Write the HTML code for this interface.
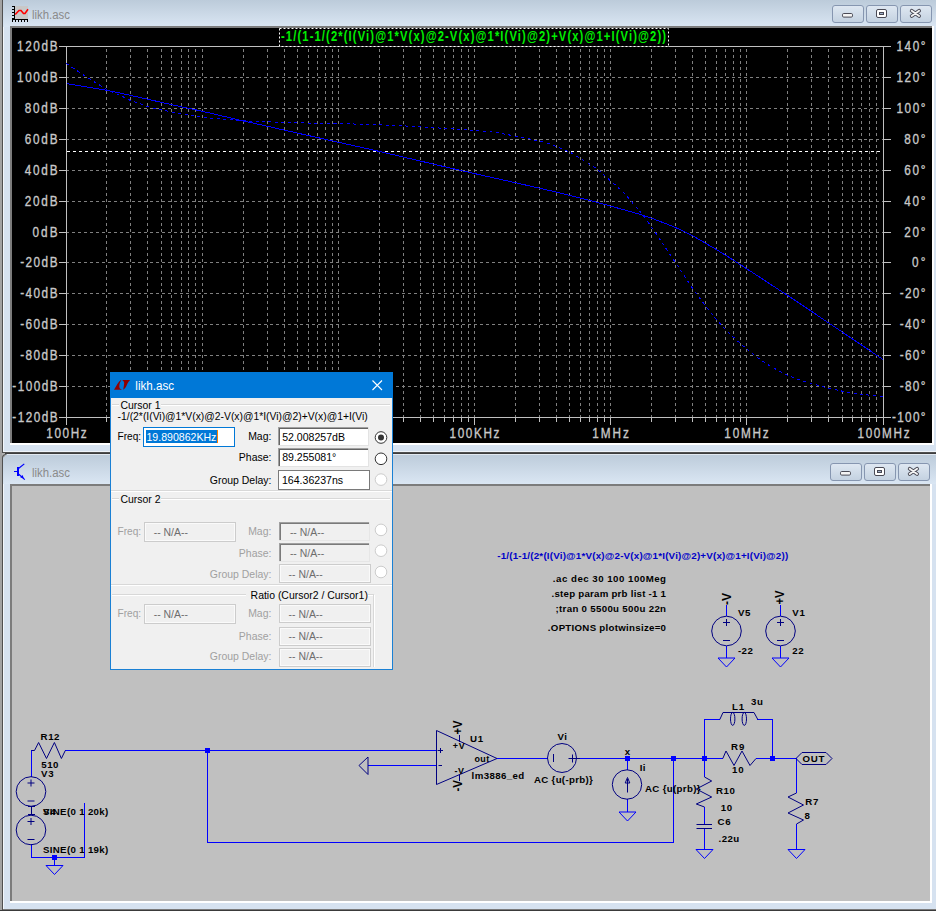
<!DOCTYPE html><html><head><meta charset="utf-8"><style>
html,body{margin:0;padding:0;background:#d6e2f0;}
body{width:936px;height:911px;overflow:hidden;position:relative;}
svg{position:absolute;left:0;top:0;}
text{font-family:"Liberation Sans",sans-serif;}
</style></head><body>
<svg width="936" height="911" viewBox="0 0 936 911">
<defs>
<linearGradient id="tg" x1="0" y1="0" x2="0" y2="1">
<stop offset="0" stop-color="#bccbda"/><stop offset="1" stop-color="#dae6f3"/></linearGradient>
<linearGradient id="bg" x1="0" y1="0" x2="0" y2="1">
<stop offset="0" stop-color="#dfe8f2"/><stop offset="1" stop-color="#c3d1e0"/></linearGradient>
</defs>

<rect x="0" y="0" width="936" height="453" fill="#d6e2f0"/>
<rect x="0" y="0" width="936" height="27" fill="url(#tg)"/>
<rect x="0" y="0" width="2" height="454" fill="#a2a2a2"/><rect x="2" y="0" width="1" height="453" fill="#4f4f4f"/><rect x="3" y="27" width="1" height="424" fill="#f2f6fb"/>
<rect x="3" y="451" width="933" height="1" fill="#eef3f8"/><rect x="3" y="452" width="933" height="1" fill="#505050"/><rect x="3" y="453" width="933" height="1" fill="#3c3c3c"/>
<rect x="10" y="26" width="924" height="419" fill="#ffffff"/>
<rect x="10" y="26" width="922" height="2" fill="#7c7c7c"/><rect x="10" y="26" width="2" height="417" fill="#7c7c7c"/>
<rect x="12" y="28" width="920" height="415" fill="#000"/>
<rect x="832.5" y="5.5" width="31" height="17" rx="2.5" ry="2.5" fill="url(#bg)" stroke="#8696b0" stroke-width="1"/><rect x="866.5" y="5.5" width="31" height="17" rx="2.5" ry="2.5" fill="url(#bg)" stroke="#8696b0" stroke-width="1"/><rect x="900.5" y="5.5" width="31" height="17" rx="2.5" ry="2.5" fill="url(#bg)" stroke="#8696b0" stroke-width="1"/><rect x="842.5" y="13.5" width="10" height="3.6" rx="1.2" fill="#f4f4f4" stroke="#4a4a55" stroke-width="1"/><rect x="876.5" y="9.5" width="10" height="8" rx="1.5" fill="#fff" stroke="#4a4a55" stroke-width="1"/><rect x="879.5" y="12.5" width="4" height="2" fill="#9fb0c8" stroke="#4a4a55" stroke-width="1"/><path d="M911.6999999999999,10.8 L919.1,16.0 M919.1,10.8 L911.6999999999999,16.0" stroke="#4a4a55" stroke-width="3.8" stroke-linecap="round"/><path d="M911.6999999999999,10.8 L919.1,16.0 M919.1,10.8 L911.6999999999999,16.0" stroke="#f4f4f4" stroke-width="1.9" stroke-linecap="round"/>
<rect x="15" y="6" width="13" height="13" fill="#c8c8c8"/>
<rect x="14" y="6" width="1" height="14" fill="#000"/><rect x="12" y="19" width="16" height="1" fill="#000"/>
<rect x="12" y="6" width="3" height="1" fill="#000"/><rect x="12" y="9" width="3" height="1" fill="#000"/><rect x="12" y="12" width="3" height="1" fill="#000"/><rect x="12" y="15" width="3" height="1" fill="#000"/><rect x="12" y="18" width="3" height="1" fill="#000"/>
<rect x="12" y="20" width="1" height="2" fill="#000"/><rect x="15" y="20" width="1" height="2" fill="#000"/><rect x="18" y="20" width="1" height="2" fill="#000"/><rect x="21" y="20" width="1" height="2" fill="#000"/><rect x="24" y="20" width="1" height="2" fill="#000"/><rect x="27" y="20" width="1" height="2" fill="#000"/>
<path d="M15.2,14.5 L19,10.5 L21,10.5 L23.5,13.5 L25,13.5 L28,9.3" stroke="#f00" stroke-width="1.6" fill="none"/>
<text x="32" y="19" font-size="12" fill="#8a8a8a" textLength="38" lengthAdjust="spacingAndGlyphs">likh.asc</text>
<path d="M66,77.5H883M66,108.5H883M66,139.5H883M66,170.5H883M66,201.5H883M66,232.5H883M66,262.5H883M66,293.5H883M66,324.5H883M66,355.5H883M66,386.5H883" stroke="#808080" stroke-width="1" stroke-dasharray="3 3" shape-rendering="crispEdges"/>
<path d="M106.5,49V417M130.5,49V417M147.5,49V417M161.5,49V417M171.5,49V417M181.5,49V417M188.5,49V417M195.5,49V417M202.5,49V417M243.5,49V417M267.5,49V417M284.5,49V417M297.5,49V417M308.5,49V417M317.5,49V417M325.5,49V417M332.5,49V417M338.5,49V417M379.5,49V417M403.5,49V417M420.5,49V417M433.5,49V417M444.5,49V417M453.5,49V417M461.5,49V417M468.5,49V417M474.5,49V417M515.5,49V417M539.5,49V417M556.5,49V417M569.5,49V417M580.5,49V417M589.5,49V417M597.5,49V417M604.5,49V417M610.5,49V417M651.5,49V417M675.5,49V417M692.5,49V417M705.5,49V417M716.5,49V417M725.5,49V417M733.5,49V417M740.5,49V417M746.5,49V417M787.5,49V417M811.5,49V417M828.5,49V417M842.5,49V417M852.5,49V417M861.5,49V417M869.5,49V417M876.5,49V417" stroke="#808080" stroke-width="1" stroke-dasharray="3 3" shape-rendering="crispEdges"/>
<path d="M59,46.5H891M59,417.5H891M66.5,46V425M883.5,46V425M59,46.5H66M884,46.5H891M59,77.5H66M884,77.5H891M59,108.5H66M884,108.5H891M59,139.5H66M884,139.5H891M59,170.5H66M884,170.5H891M59,201.5H66M884,201.5H891M59,232.5H66M884,232.5H891M59,262.5H66M884,262.5H891M59,293.5H66M884,293.5H891M59,324.5H66M884,324.5H891M59,355.5H66M884,355.5H891M59,386.5H66M884,386.5H891M59,417.5H66M884,417.5H891M66.5,418V425M106.5,418V422M130.5,418V422M147.5,418V422M161.5,418V422M171.5,418V422M181.5,418V422M188.5,418V422M195.5,418V422M202.5,418V425M243.5,418V422M267.5,418V422M284.5,418V422M297.5,418V422M308.5,418V422M317.5,418V422M325.5,418V422M332.5,418V422M338.5,418V425M379.5,418V422M403.5,418V422M420.5,418V422M433.5,418V422M444.5,418V422M453.5,418V422M461.5,418V422M468.5,418V422M474.5,418V425M515.5,418V422M539.5,418V422M556.5,418V422M569.5,418V422M580.5,418V422M589.5,418V422M597.5,418V422M604.5,418V422M610.5,418V425M651.5,418V422M675.5,418V422M692.5,418V422M705.5,418V422M716.5,418V422M725.5,418V422M733.5,418V422M740.5,418V422M746.5,418V425M787.5,418V422M811.5,418V422M828.5,418V422M842.5,418V422M852.5,418V422M861.5,418V422M869.5,418V422M876.5,418V422M883.5,418V425" stroke="#c0c0c0" stroke-width="1" fill="none" shape-rendering="crispEdges"/>
<g font-size="14" fill="#c8c8c8" stroke="#c8c8c8" stroke-width="0.35"><text transform="translate(17.02,50.80) scale(0.84,1)" x="0" y="0" textLength="48.19" lengthAdjust="spacing">120dB</text><text transform="translate(896.54,50.80) scale(0.84,1)" x="0" y="0" textLength="34.47" lengthAdjust="spacing">140°</text><text transform="translate(17.02,81.80) scale(0.84,1)" x="0" y="0" textLength="48.19" lengthAdjust="spacing">100dB</text><text transform="translate(896.54,81.80) scale(0.84,1)" x="0" y="0" textLength="34.47" lengthAdjust="spacing">120°</text><text transform="translate(24.80,112.80) scale(0.84,1)" x="0" y="0" textLength="38.92" lengthAdjust="spacing">80dB</text><text transform="translate(896.54,112.80) scale(0.84,1)" x="0" y="0" textLength="34.47" lengthAdjust="spacing">100°</text><text transform="translate(24.80,143.80) scale(0.84,1)" x="0" y="0" textLength="38.92" lengthAdjust="spacing">60dB</text><text transform="translate(904.33,143.80) scale(0.84,1)" x="0" y="0" textLength="25.20" lengthAdjust="spacing">80°</text><text transform="translate(24.80,174.80) scale(0.84,1)" x="0" y="0" textLength="38.92" lengthAdjust="spacing">40dB</text><text transform="translate(904.33,174.80) scale(0.84,1)" x="0" y="0" textLength="25.20" lengthAdjust="spacing">60°</text><text transform="translate(24.80,205.80) scale(0.84,1)" x="0" y="0" textLength="38.92" lengthAdjust="spacing">20dB</text><text transform="translate(904.33,205.80) scale(0.84,1)" x="0" y="0" textLength="25.20" lengthAdjust="spacing">40°</text><text transform="translate(32.59,236.80) scale(0.84,1)" x="0" y="0" textLength="29.65" lengthAdjust="spacing">0dB</text><text transform="translate(904.33,236.80) scale(0.84,1)" x="0" y="0" textLength="25.20" lengthAdjust="spacing">20°</text><text transform="translate(20.14,266.80) scale(0.84,1)" x="0" y="0" textLength="44.47" lengthAdjust="spacing">-20dB</text><text transform="translate(912.12,266.80) scale(0.84,1)" x="0" y="0" textLength="15.93" lengthAdjust="spacing">0°</text><text transform="translate(20.14,297.80) scale(0.84,1)" x="0" y="0" textLength="44.47" lengthAdjust="spacing">-40dB</text><text transform="translate(899.67,297.80) scale(0.84,1)" x="0" y="0" textLength="30.75" lengthAdjust="spacing">-20°</text><text transform="translate(20.14,328.80) scale(0.84,1)" x="0" y="0" textLength="44.47" lengthAdjust="spacing">-60dB</text><text transform="translate(899.67,328.80) scale(0.84,1)" x="0" y="0" textLength="30.75" lengthAdjust="spacing">-40°</text><text transform="translate(20.14,359.80) scale(0.84,1)" x="0" y="0" textLength="44.47" lengthAdjust="spacing">-80dB</text><text transform="translate(899.67,359.80) scale(0.84,1)" x="0" y="0" textLength="30.75" lengthAdjust="spacing">-60°</text><text transform="translate(12.36,390.80) scale(0.84,1)" x="0" y="0" textLength="53.74" lengthAdjust="spacing">-100dB</text><text transform="translate(899.67,390.80) scale(0.84,1)" x="0" y="0" textLength="30.75" lengthAdjust="spacing">-80°</text><text transform="translate(12.36,421.80) scale(0.84,1)" x="0" y="0" textLength="53.74" lengthAdjust="spacing">-120dB</text><text transform="translate(891.88,421.80) scale(0.84,1)" x="0" y="0" textLength="40.02" lengthAdjust="spacing">-100°</text><text transform="translate(46.27,437.80) scale(0.84,1)" x="0" y="0" textLength="48.18" lengthAdjust="spacing">100Hz</text><text transform="translate(185.38,437.80) scale(0.84,1)" x="0" y="0" textLength="40.76" lengthAdjust="spacing">1KHz</text><text transform="translate(317.49,437.80) scale(0.84,1)" x="0" y="0" textLength="50.02" lengthAdjust="spacing">10KHz</text><text transform="translate(449.60,437.80) scale(0.84,1)" x="0" y="0" textLength="59.29" lengthAdjust="spacing">100KHz</text><text transform="translate(592.22,437.80) scale(0.84,1)" x="0" y="0" textLength="43.52" lengthAdjust="spacing">1MHz</text><text transform="translate(724.33,437.80) scale(0.84,1)" x="0" y="0" textLength="52.79" lengthAdjust="spacing">10MHz</text><text transform="translate(857.43,437.80) scale(0.84,1)" x="0" y="0" textLength="62.06" lengthAdjust="spacing">100MHz</text></g>
<path d="M67,151.5H883" stroke="#fff" stroke-width="1" stroke-dasharray="3 3" shape-rendering="crispEdges"/>
<path d="M66.50,83.60 C73.25,84.73 94.75,88.08 107.00,90.40 C119.25,92.72 128.08,94.87 140.00,97.50 C151.92,100.13 168.03,103.88 178.50,106.20 C188.97,108.52 192.12,108.97 202.80,111.40 C213.48,113.83 233.07,118.60 242.60,120.80 C252.13,123.00 250.48,122.47 260.00,124.60 C269.52,126.73 279.75,129.12 299.70,133.60 C319.65,138.08 354.65,145.77 379.70,151.50 C404.75,157.23 424.95,162.25 450.00,168.00 C475.05,173.75 511.67,181.83 530.00,186.00 C548.33,190.17 549.88,190.55 560.00,193.00 C570.12,195.45 580.45,198.02 590.70,200.70 C600.95,203.38 612.78,206.67 621.50,209.10 C630.22,211.53 636.58,213.25 643.00,215.30 C649.42,217.35 653.83,219.03 660.00,221.40 C666.17,223.77 674.67,227.15 680.00,229.50 C685.33,231.85 685.00,231.58 692.00,235.50 C699.00,239.42 711.67,246.67 722.00,253.00 C732.33,259.33 742.67,266.17 754.00,273.50 C765.33,280.83 777.42,288.67 790.00,297.00 C802.58,305.33 814.05,313.12 829.50,323.50 C844.95,333.88 873.83,353.33 882.70,359.30" stroke="#0000ff" stroke-width="1" fill="none" shape-rendering="crispEdges"/>
<path d="M66.50,63.50 C69.68,65.65 79.57,72.48 85.60,76.40 C91.63,80.32 98.70,84.58 102.70,87.00 C106.70,89.42 106.47,89.40 109.60,90.90 C112.73,92.40 118.10,94.45 121.50,96.00 C124.90,97.55 126.92,98.92 130.00,100.20 C133.08,101.48 136.42,102.47 140.00,103.70 C143.58,104.93 147.65,106.52 151.50,107.60 C155.35,108.68 159.03,109.35 163.10,110.20 C167.17,111.05 171.85,111.92 175.90,112.70 C179.95,113.48 183.55,114.22 187.40,114.90 C191.25,115.58 194.08,116.17 199.00,116.80 C203.92,117.43 211.78,118.22 216.90,118.70 C222.02,119.18 224.78,119.32 229.70,119.70 C234.62,120.08 241.48,120.68 246.40,121.00 C251.32,121.32 250.27,121.30 259.20,121.60 C268.13,121.90 279.87,122.27 300.00,122.80 C320.13,123.33 356.03,123.88 380.00,124.80 C403.97,125.72 425.90,127.18 443.80,128.30 C461.70,129.42 475.43,130.18 487.40,131.50 C499.37,132.82 505.78,134.32 515.60,136.20 C525.42,138.08 538.90,140.82 546.30,142.80 C553.70,144.78 555.80,146.40 560.00,148.10 C564.20,149.80 567.67,150.98 571.50,153.00 C575.33,155.02 579.03,157.72 583.00,160.20 C586.97,162.68 591.45,165.12 595.30,167.90 C599.15,170.68 601.73,173.10 606.10,176.90 C610.47,180.70 616.88,186.13 621.50,190.70 C626.12,195.27 630.22,200.20 633.80,204.30 C637.38,208.40 639.42,210.60 643.00,215.30 C646.58,220.00 651.20,226.57 655.30,232.50 C659.40,238.43 663.23,244.40 667.60,250.90 C671.97,257.40 677.13,264.98 681.50,271.50 C685.87,278.02 689.43,283.78 693.80,290.00 C698.17,296.22 703.73,303.68 707.70,308.80 C711.67,313.92 714.28,316.90 717.60,320.70 C720.92,324.50 723.62,327.63 727.60,331.60 C731.58,335.57 737.40,340.85 741.50,344.50 C745.60,348.15 748.37,350.50 752.20,353.50 C756.03,356.50 759.88,359.52 764.50,362.50 C769.12,365.48 775.12,368.88 779.90,371.40 C784.68,373.92 787.95,375.58 793.20,377.60 C798.45,379.62 805.35,381.72 811.40,383.50 C817.45,385.28 823.45,386.85 829.50,388.30 C835.55,389.75 841.82,391.15 847.70,392.20 C853.58,393.25 858.97,393.88 864.80,394.60 C870.63,395.32 879.72,396.18 882.70,396.50" stroke="#0000ff" stroke-width="1" fill="none" stroke-dasharray="3 3.5" shape-rendering="crispEdges"/>
<rect x="279.5" y="28.5" width="389" height="18" fill="#000" stroke="#fff" stroke-width="1" stroke-dasharray="2 2"/>
<text transform="translate(281,41.3) scale(0.8,1)" x="0" y="0" font-size="14" font-weight="bold" fill="#00f000" textLength="481.25" lengthAdjust="spacing">-1/(1-1/(2*(I(Vi)@1*V(x)@2-V(x)@1*I(Vi)@2)+V(x)@1+I(Vi)@2))</text>
<rect x="0" y="454" width="936" height="457" fill="#d6e2f0"/>
<rect x="3" y="454" width="933" height="30" fill="url(#tg)"/><rect x="3" y="454" width="933" height="1" fill="#e2e9f1"/>
<rect x="0" y="454" width="2" height="457" fill="#a2a2a2"/><rect x="2" y="457" width="1" height="454" fill="#4f4f4f"/><rect x="2" y="453" width="3" height="4" fill="#b0b0b0"/><path d="M2.5,458 Q2.5,454.5 6.5,454.5" stroke="#555" stroke-width="1.2" fill="none"/><rect x="3" y="484" width="1" height="425" fill="#f2f6fb"/>
<rect x="3" y="909" width="933" height="1" fill="#7a7a7a"/><rect x="0" y="910" width="936" height="1" fill="#3a3a3a"/>
<rect x="10" y="484" width="922" height="419" fill="#ffffff"/>
<rect x="10" y="484" width="920" height="2" fill="#7c7c7c"/><rect x="10" y="484" width="2" height="417" fill="#7c7c7c"/>
<rect x="12" y="486" width="918" height="415" fill="#c0c0c0"/>
<rect x="830.5" y="463.5" width="31" height="17" rx="2.5" ry="2.5" fill="url(#bg)" stroke="#8696b0" stroke-width="1"/><rect x="864.5" y="463.5" width="31" height="17" rx="2.5" ry="2.5" fill="url(#bg)" stroke="#8696b0" stroke-width="1"/><rect x="898.5" y="463.5" width="31" height="17" rx="2.5" ry="2.5" fill="url(#bg)" stroke="#8696b0" stroke-width="1"/><rect x="840.5" y="471.5" width="10" height="3.6" rx="1.2" fill="#f4f4f4" stroke="#4a4a55" stroke-width="1"/><rect x="874.5" y="467.5" width="10" height="8" rx="1.5" fill="#fff" stroke="#4a4a55" stroke-width="1"/><rect x="877.5" y="470.5" width="4" height="2" fill="#9fb0c8" stroke="#4a4a55" stroke-width="1"/><path d="M909.6999999999999,468.79999999999995 L917.1,474.0 M917.1,468.79999999999995 L909.6999999999999,474.0" stroke="#4a4a55" stroke-width="3.8" stroke-linecap="round"/><path d="M909.6999999999999,468.79999999999995 L917.1,474.0 M917.1,468.79999999999995 L909.6999999999999,474.0" stroke="#f4f4f4" stroke-width="1.9" stroke-linecap="round"/>
<rect x="14" y="471" width="3" height="1" fill="#0000ff"/><rect x="17" y="467" width="2" height="9" fill="#0000ff"/><path d="M18.8,468.3 L24.3,463.9 M18.8,474.2 L24.8,479.6" stroke="#0000ff" stroke-width="1.2" fill="none"/><path d="M20.2,477.3 L22.6,475 L24,478.8 Z" fill="#0000ff"/>
<text x="32" y="477" font-size="12" fill="#8a8a8a" textLength="38" lengthAdjust="spacingAndGlyphs">likh.asc</text>
<path d="M65,750.5H436M31.5,750V777M31.5,844V857.5H84.5V803M207.5,750V842.5H673.5V758M368,765.5H436M497,758.5H548M577,758.5H723M756,758.5H796M627.5,758V770M627.5,799V812M704.5,719V777M704.5,719.5H720M757,719.5H772.5V758M704.5,807V824M704.5,829V849M796.5,758V793M796.5,824V849M726.5,605V616M726.5,646V658M780.5,605V616M780.5,646V658" stroke="#0000ff" stroke-width="1" fill="none" shape-rendering="crispEdges"/>
<rect x="205.0" y="748.0" width="5" height="5" fill="#0000ff"/>
<rect x="52.0" y="855.0" width="5" height="5" fill="#0000ff"/>
<rect x="625.0" y="756.0" width="5" height="5" fill="#0000ff"/>
<rect x="671.0" y="756.0" width="5" height="5" fill="#0000ff"/>
<rect x="702.0" y="756.0" width="5" height="5" fill="#0000ff"/>
<rect x="770.0" y="756.0" width="5" height="5" fill="#0000ff"/>
<path d="M46.0,865.5H63.0L54.5,874.5ZM619.0,812H636.0L627.5,821ZM696.0,849.5H713.0L704.5,858.5ZM788.0,849.5H805.0L796.5,858.5ZM718.0,658H735.0L726.5,667ZM772.0,658H789.0L780.5,667ZM54.5,857.5V865.5" stroke="#0000ff" stroke-width="1" fill="none"/>
<path d="M31.5,750.5H34.5L38.6,742.5L46.5,758.5L54.4,742.5L61.4,758.5L65.3,750.5M722.8,758.5L726,751L734,765.5L742,751L750,765.5L756,758.5M704.5,777L711.7,781L696.3,789L711.7,797L696.3,804L704.5,807M796.5,793L788,797L803.5,805L788,813L803.5,820L796.5,824M696.5,824.5H712M696.5,828.5H712M436.5,730.5L497,758.5L436.5,784.5ZM368,757V774.5L359,765.5ZM796,758.5L802,752.5H826L832,758.5L826,764.5H802ZM719.8,719.5L723,712.5H754L757.8,719.5" stroke="#000080" stroke-width="1" fill="none"/>
<circle cx="31" cy="791.5" r="14.8" fill="none" stroke="#000080"/><path d="M27.5,783.0H34.5M31,779.5V786.5M27.5,801.0H34.5" stroke="#000080" stroke-width="1" fill="none"/><circle cx="31" cy="830" r="14.8" fill="none" stroke="#000080"/><path d="M27.5,821.5H34.5M31,818V825M27.5,839.5H34.5" stroke="#000080" stroke-width="1" fill="none"/><circle cx="726.5" cy="631" r="14.8" fill="none" stroke="#000080"/><path d="M723.0,622.5H730.0M726.5,619V626M723.0,640.5H730.0" stroke="#000080" stroke-width="1" fill="none"/><circle cx="780.5" cy="631" r="14.8" fill="none" stroke="#000080"/><path d="M777.0,622.5H784.0M780.5,619V626M777.0,640.5H784.0" stroke="#000080" stroke-width="1" fill="none"/>
<ellipse cx="732.7" cy="718.9" rx="2.2" ry="6.5" fill="none" stroke="#000080"/><ellipse cx="744.3" cy="718.9" rx="2.2" ry="6.5" fill="none" stroke="#000080"/>
<path d="M31.5,806V815M28,806.5H35M28,814.5H35" stroke="#000080" fill="none"/>
<circle cx="562" cy="758" r="14.5" fill="none" stroke="#000080"/><path d="M553.5,754V762M568.5,758.5H580M572.5,754.5V762.5" stroke="#000080" fill="none"/>
<circle cx="627" cy="784.5" r="14.7" fill="none" stroke="#000080"/><path d="M627.5,792.5V779M625.2,783L627.5,777.5L629.8,783Z" stroke="#000080" fill="none"/>
<path d="M459.5,735V742M459.5,774.5V781" stroke="#000080" fill="none"/>
<path d="M437.5,750.5H443M440.5,748V753M438.5,765.5H442" stroke="#000080" fill="none"/>
<text x="40.60" y="740" font-size="9.7" fill="#000" font-weight="bold" textLength="18.89" lengthAdjust="spacing">R12</text><text x="41.30" y="767.8" font-size="9.7" fill="#000" font-weight="bold" textLength="17.18" lengthAdjust="spacing">510</text><text x="41.00" y="776.8" font-size="9.7" fill="#000" font-weight="bold" textLength="12.60" lengthAdjust="spacing">V3</text><text x="43.00" y="815.2" font-size="9.7" fill="#000" font-weight="bold" textLength="12.60" lengthAdjust="spacing">V4</text><text x="43.00" y="815.2" font-size="9.7" fill="#000" font-weight="bold" textLength="65.26" lengthAdjust="spacing">SINE(0 1 20k)</text><text x="43.00" y="853" font-size="9.7" fill="#000" font-weight="bold" textLength="65.26" lengthAdjust="spacing">SINE(0 1 19k)</text><text x="470.00" y="741.8" font-size="9.7" fill="#000" font-weight="bold" textLength="13.17" lengthAdjust="spacing">U1</text><text x="471.60" y="778.7" font-size="9.7" fill="#000" font-weight="bold" textLength="52.68" lengthAdjust="spacing">lm3886_ed</text><text x="452.80" y="748.7" font-size="8.93" fill="#000" font-weight="bold" textLength="11.89" lengthAdjust="spacing">+V</text><text x="474.40" y="761.6" font-size="8.93" fill="#000" font-weight="bold" textLength="14.77" lengthAdjust="spacing">out</text><text x="454.50" y="774" font-size="8.93" fill="#000" font-weight="bold" textLength="9.50" lengthAdjust="spacing">-V</text><text x="557.40" y="740.3" font-size="9.7" fill="#000" font-weight="bold" textLength="9.55" lengthAdjust="spacing">Vi</text><text x="533.90" y="783" font-size="9.7" fill="#000" font-weight="bold" textLength="58.93" lengthAdjust="spacing">AC {u(-prb)}</text><text x="624.70" y="755" font-size="9.7" fill="#000" font-weight="bold" textLength="5.73" lengthAdjust="spacing">x</text><text x="639.70" y="770.9" font-size="9.7" fill="#000" font-weight="bold" textLength="5.72" lengthAdjust="spacing">Ii</text><text x="645.00" y="791.6" font-size="9.7" fill="#000" font-weight="bold" textLength="55.50" lengthAdjust="spacing">AC {u(prb)}</text><text x="732.10" y="710.2" font-size="9.7" fill="#000" font-weight="bold" textLength="12.02" lengthAdjust="spacing">L1</text><text x="750.90" y="705" font-size="9.7" fill="#000" font-weight="bold" textLength="12.02" lengthAdjust="spacing">3u</text><text x="731.10" y="749.9" font-size="9.7" fill="#000" font-weight="bold" textLength="13.17" lengthAdjust="spacing">R9</text><text x="732.10" y="772.8" font-size="9.7" fill="#000" font-weight="bold" textLength="11.46" lengthAdjust="spacing">10</text><text x="802.60" y="762.4" font-size="9.7" fill="#000" font-weight="bold" textLength="21.74" lengthAdjust="spacing">OUT</text><text x="715.90" y="793.7" font-size="9.7" fill="#000" font-weight="bold" textLength="18.89" lengthAdjust="spacing">R10</text><text x="720.70" y="811" font-size="9.7" fill="#000" font-weight="bold" textLength="11.46" lengthAdjust="spacing">10</text><text x="717.50" y="825" font-size="9.7" fill="#000" font-weight="bold" textLength="13.17" lengthAdjust="spacing">C6</text><text x="718.60" y="842.3" font-size="9.7" fill="#000" font-weight="bold" textLength="20.61" lengthAdjust="spacing">.22u</text><text x="805.20" y="805.2" font-size="9.7" fill="#000" font-weight="bold" textLength="13.17" lengthAdjust="spacing">R7</text><text x="804.50" y="819.3" font-size="9.7" fill="#000" font-weight="bold" textLength="5.73" lengthAdjust="spacing">8</text><text x="737.90" y="615.9" font-size="9.7" fill="#000" font-weight="bold" textLength="12.60" lengthAdjust="spacing">V5</text><text x="737.90" y="654" font-size="9.7" fill="#000" font-weight="bold" textLength="14.89" lengthAdjust="spacing">-22</text><text x="792.20" y="615.9" font-size="9.7" fill="#000" font-weight="bold" textLength="12.60" lengthAdjust="spacing">V1</text><text x="792.20" y="654" font-size="9.7" fill="#000" font-weight="bold" textLength="11.46" lengthAdjust="spacing">22</text><text x="552.87" y="581.9" font-size="9.7" fill="#000" font-weight="bold" textLength="113.13" lengthAdjust="spacing">.ac dec 30 100 100Meg</text><text x="551.51" y="596.8" font-size="9.7" fill="#000" font-weight="bold" textLength="114.49" lengthAdjust="spacing">.step param prb list -1 1</text><text x="555.52" y="611.8" font-size="9.7" fill="#000" font-weight="bold" textLength="110.48" lengthAdjust="spacing">;tran 0 5500u 500u 22n</text><text x="547.83" y="630.6" font-size="9.7" fill="#000" font-weight="bold" textLength="118.17" lengthAdjust="spacing">.OPTIONS plotwinsize=0</text><text x="497.20" y="559.1" font-size="9.8" fill="#0000c8" font-weight="bold" textLength="291.00" lengthAdjust="spacing">-1/(1-1/(2*(I(Vi)@1*V(x)@2-V(x)@1*I(Vi)@2)+V(x)@1+I(Vi)@2))</text>
<text transform="translate(730.5,605) rotate(-90)" x="0" y="0" font-size="12" font-weight="bold" fill="#000" textLength="12" lengthAdjust="spacingAndGlyphs">-V</text>
<text transform="translate(783.5,604.5) rotate(-90)" x="0" y="0" font-size="12" font-weight="bold" fill="#000" textLength="14" lengthAdjust="spacingAndGlyphs">+V</text>
<text transform="translate(462,734.5) rotate(-90)" x="0" y="0" font-size="12" font-weight="bold" fill="#000" textLength="14" lengthAdjust="spacingAndGlyphs">+V</text>
<text transform="translate(462,791.5) rotate(-90)" x="0" y="0" font-size="12" font-weight="bold" fill="#000" textLength="11.5" lengthAdjust="spacingAndGlyphs">-V</text>
<rect x="110" y="372" width="283" height="298" fill="#1a80d4"/>
<rect x="111" y="398" width="281" height="271" fill="#f0f0f0"/>
<rect x="110" y="372" width="283" height="26" fill="#0078d7"/>
<path d="M121,380 C118.5,381.5 116.5,385.5 114,389.8 L122,389.8 C120.7,389.3 119.5,388.6 119.3,386.8 C119.2,384.5 120,382.2 121.3,380.3 Z" fill="#900000"/>
<path d="M122.2,380 L130.2,380 C128.8,381 127.6,383 126.6,385.5 C125.8,387.5 124.6,388.9 123.2,389.8 C123.5,388 124,385 124.2,383 C124.1,381.8 123.3,380.8 122.2,380 Z" fill="#900000"/>
<text x="135.30" y="389.5" font-size="12.5" fill="#fff" textLength="38.76" lengthAdjust="spacingAndGlyphs">likh.asc</text>
<path d="M372.5,380.5 L382,390 M382,380.5 L372.5,390" stroke="#fff" stroke-width="1.1"/>
<path d="M112,404.5H119" stroke="#d8d8d8" stroke-width="1" shape-rendering="crispEdges"/><path d="M112,405.5H119" stroke="#fff" stroke-width="1" shape-rendering="crispEdges"/>
<path d="M161,404.5H390" stroke="#d8d8d8" stroke-width="1" shape-rendering="crispEdges"/><path d="M161,405.5H390" stroke="#fff" stroke-width="1" shape-rendering="crispEdges"/>
<text x="120.50" y="408.6" font-size="11" fill="#000" textLength="40.07" lengthAdjust="spacingAndGlyphs">Cursor 1</text>
<clipPath id="dc"><rect x="111" y="405" width="257" height="20"/></clipPath>
<g clip-path="url(#dc)"><text x="117.60" y="419.8" font-size="11" fill="#000" textLength="273.26" lengthAdjust="spacingAndGlyphs">-1/(2*(I(Vi)@1*V(x)@2-V(x)@1*I(Vi)@2)+V(x)@1+I(Vi)@2))</text></g>
<text x="117.50" y="439.9" font-size="11" fill="#000" textLength="23.62" lengthAdjust="spacingAndGlyphs">Freq:</text>
<text x="248.17" y="440.4" font-size="11" fill="#000" textLength="23.23" lengthAdjust="spacingAndGlyphs">Mag:</text>
<text x="238.87" y="461.1" font-size="11" fill="#000" textLength="32.53" lengthAdjust="spacingAndGlyphs">Phase:</text>
<text x="209.84" y="484" font-size="11" fill="#000" textLength="61.56" lengthAdjust="spacingAndGlyphs">Group Delay:</text>
<rect x="143.5" y="427.5" width="91" height="19" fill="#fff" stroke="#0078d7"/>
<rect x="146" y="430" width="71" height="13" fill="#0078d7"/>
<text x="146.50" y="440.7" font-size="11" fill="#fff" textLength="69.86" lengthAdjust="spacingAndGlyphs">19.890862KHz</text>
<rect x="217" y="430" width="1" height="13" fill="#ff8000"/>
<rect x="278" y="427" width="91" height="19" fill="#fff"/><rect x="278" y="427" width="91" height="2" fill="#a0a0a0"/><rect x="278" y="427" width="2" height="19" fill="#a0a0a0"/><rect x="279" y="428" width="89" height="1" fill="#646464"/><rect x="279" y="428" width="1" height="17" fill="#646464"/><rect x="278" y="445" width="91" height="1" fill="#e3e3e3"/><rect x="368" y="427" width="1" height="19" fill="#e3e3e3"/>
<text x="282.20" y="440.6" font-size="11" fill="#000" textLength="62.83" lengthAdjust="spacingAndGlyphs">52.008257dB</text>
<rect x="278" y="448" width="91" height="19" fill="#fff"/><rect x="278" y="448" width="91" height="2" fill="#a0a0a0"/><rect x="278" y="448" width="2" height="19" fill="#a0a0a0"/><rect x="279" y="449" width="89" height="1" fill="#646464"/><rect x="279" y="449" width="1" height="17" fill="#646464"/><rect x="278" y="466" width="91" height="1" fill="#e3e3e3"/><rect x="368" y="448" width="1" height="19" fill="#e3e3e3"/>
<text x="282.20" y="460.8" font-size="11" fill="#000" textLength="54.13" lengthAdjust="spacingAndGlyphs">89.255081°</text>
<rect x="278.5" y="470.5" width="91" height="19" fill="#fff" stroke="#7a7a7a" shape-rendering="crispEdges"/>
<text x="282.00" y="483.5" font-size="11" fill="#000" textLength="61.06" lengthAdjust="spacingAndGlyphs">164.36237ns</text>
<circle cx="381" cy="437.5" r="5.8" fill="#fff" stroke="#333333" stroke-width="1"/><circle cx="381" cy="437.5" r="3" fill="#333"/>
<circle cx="381" cy="458.8" r="5.8" fill="#fff" stroke="#333333" stroke-width="1"/>
<circle cx="381" cy="479.6" r="5.8" fill="#fff" stroke="#cccccc" stroke-width="1"/>
<path d="M111,490.5H392" stroke="#d8d8d8" stroke-width="1" shape-rendering="crispEdges"/><path d="M111,491.5H392" stroke="#fff" stroke-width="1" shape-rendering="crispEdges"/>
<path d="M112,498.5H119" stroke="#d8d8d8" stroke-width="1" shape-rendering="crispEdges"/><path d="M112,499.5H119" stroke="#fff" stroke-width="1" shape-rendering="crispEdges"/>
<path d="M161,498.5H390" stroke="#d8d8d8" stroke-width="1" shape-rendering="crispEdges"/><path d="M161,499.5H390" stroke="#fff" stroke-width="1" shape-rendering="crispEdges"/>
<text x="120.50" y="502.6" font-size="11" fill="#000" textLength="40.07" lengthAdjust="spacingAndGlyphs">Cursor 2</text>
<text x="117.50" y="535.3" font-size="11" fill="#a0a0a0" textLength="23.62" lengthAdjust="spacingAndGlyphs">Freq:</text>
<rect x="144.5" y="522.5" width="91" height="19" fill="#f0f0f0" stroke="#cccccc" shape-rendering="crispEdges"/><rect x="145.5" y="523.5" width="89" height="17" fill="none" stroke="#fafafa" shape-rendering="crispEdges"/>
<text x="153.70" y="535.6" font-size="11" fill="#6d6d6d" textLength="34.24" lengthAdjust="spacingAndGlyphs">-- N/A--</text>
<text x="248.17" y="535.2" font-size="11" fill="#a0a0a0" textLength="23.23" lengthAdjust="spacingAndGlyphs">Mag:</text>
<text x="238.87" y="556.8" font-size="11" fill="#a0a0a0" textLength="32.53" lengthAdjust="spacingAndGlyphs">Phase:</text>
<text x="209.84" y="577.6" font-size="11" fill="#a0a0a0" textLength="61.56" lengthAdjust="spacingAndGlyphs">Group Delay:</text>
<rect x="279" y="522" width="91" height="19" fill="#f0f0f0"/><rect x="279" y="522" width="91" height="2" fill="#a0a0a0"/><rect x="279" y="522" width="2" height="19" fill="#a0a0a0"/><rect x="280" y="523" width="89" height="1" fill="#7a7a7a"/><rect x="280" y="523" width="1" height="17" fill="#7a7a7a"/><rect x="279" y="540" width="91" height="1" fill="#e6e6e6"/><rect x="369" y="522" width="1" height="19" fill="#e6e6e6"/>
<text x="289.90" y="535.6" font-size="11" fill="#6d6d6d" textLength="34.24" lengthAdjust="spacingAndGlyphs">-- N/A--</text>
<rect x="279" y="543" width="91" height="19" fill="#f0f0f0"/><rect x="279" y="543" width="91" height="2" fill="#a0a0a0"/><rect x="279" y="543" width="2" height="19" fill="#a0a0a0"/><rect x="280" y="544" width="89" height="1" fill="#7a7a7a"/><rect x="280" y="544" width="1" height="17" fill="#7a7a7a"/><rect x="279" y="561" width="91" height="1" fill="#e6e6e6"/><rect x="369" y="543" width="1" height="19" fill="#e6e6e6"/>
<text x="289.90" y="556.8" font-size="11" fill="#6d6d6d" textLength="34.24" lengthAdjust="spacingAndGlyphs">-- N/A--</text>
<rect x="279.5" y="564.5" width="91" height="18" fill="#f0f0f0" stroke="#cccccc" shape-rendering="crispEdges"/><rect x="280.5" y="565.5" width="89" height="16" fill="none" stroke="#fafafa" shape-rendering="crispEdges"/>
<text x="288.60" y="577.6" font-size="11" fill="#6d6d6d" textLength="34.24" lengthAdjust="spacingAndGlyphs">-- N/A--</text>
<circle cx="381" cy="529.9" r="5.8" fill="#fff" stroke="#cccccc" stroke-width="1"/>
<circle cx="381" cy="550.7" r="5.8" fill="#fff" stroke="#cccccc" stroke-width="1"/>
<circle cx="381" cy="572" r="5.8" fill="#fff" stroke="#cccccc" stroke-width="1"/>
<path d="M111,584.5H392" stroke="#d8d8d8" stroke-width="1" shape-rendering="crispEdges"/><path d="M111,585.5H392" stroke="#fff" stroke-width="1" shape-rendering="crispEdges"/>
<path d="M112,594.5H246" stroke="#d8d8d8" stroke-width="1" shape-rendering="crispEdges"/><path d="M112,595.5H246" stroke="#fff" stroke-width="1" shape-rendering="crispEdges"/>
<text x="250.60" y="598.9" font-size="11" fill="#000" textLength="117.29" lengthAdjust="spacingAndGlyphs">Ratio (Cursor2 / Cursor1)</text>
<path d="M368,594.5H374" stroke="#d8d8d8" stroke-width="1" shape-rendering="crispEdges"/><path d="M368,595.5H374" stroke="#fff" stroke-width="1" shape-rendering="crispEdges"/>
<path d="M373.5,595V667" stroke="#d8d8d8" shape-rendering="crispEdges"/><path d="M374.5,595V667" stroke="#fff" shape-rendering="crispEdges"/>
<text x="117.50" y="617.4" font-size="11" fill="#a0a0a0" textLength="23.62" lengthAdjust="spacingAndGlyphs">Freq:</text>
<rect x="144.5" y="604.5" width="91" height="19" fill="#f0f0f0" stroke="#cccccc" shape-rendering="crispEdges"/><rect x="145.5" y="605.5" width="89" height="17" fill="none" stroke="#fafafa" shape-rendering="crispEdges"/>
<text x="153.70" y="617.7" font-size="11" fill="#6d6d6d" textLength="34.24" lengthAdjust="spacingAndGlyphs">-- N/A--</text>
<text x="248.17" y="617.3" font-size="11" fill="#a0a0a0" textLength="23.23" lengthAdjust="spacingAndGlyphs">Mag:</text>
<text x="238.87" y="639.6" font-size="11" fill="#a0a0a0" textLength="32.53" lengthAdjust="spacingAndGlyphs">Phase:</text>
<text x="209.84" y="660" font-size="11" fill="#a0a0a0" textLength="61.56" lengthAdjust="spacingAndGlyphs">Group Delay:</text>
<rect x="279.5" y="604.5" width="91" height="18" fill="#f0f0f0" stroke="#cccccc" shape-rendering="crispEdges"/><rect x="280.5" y="605.5" width="89" height="16" fill="none" stroke="#fafafa" shape-rendering="crispEdges"/>
<text x="288.60" y="618.1" font-size="11" fill="#6d6d6d" textLength="34.24" lengthAdjust="spacingAndGlyphs">-- N/A--</text>
<rect x="279.5" y="627.5" width="91" height="18" fill="#f0f0f0" stroke="#cccccc" shape-rendering="crispEdges"/><rect x="280.5" y="628.5" width="89" height="16" fill="none" stroke="#fafafa" shape-rendering="crispEdges"/>
<text x="288.60" y="639.6" font-size="11" fill="#6d6d6d" textLength="34.24" lengthAdjust="spacingAndGlyphs">-- N/A--</text>
<rect x="279.5" y="648.5" width="91" height="18" fill="#f0f0f0" stroke="#cccccc" shape-rendering="crispEdges"/><rect x="280.5" y="649.5" width="89" height="16" fill="none" stroke="#fafafa" shape-rendering="crispEdges"/>
<text x="288.60" y="660" font-size="11" fill="#6d6d6d" textLength="34.24" lengthAdjust="spacingAndGlyphs">-- N/A--</text>
</svg></body></html>
